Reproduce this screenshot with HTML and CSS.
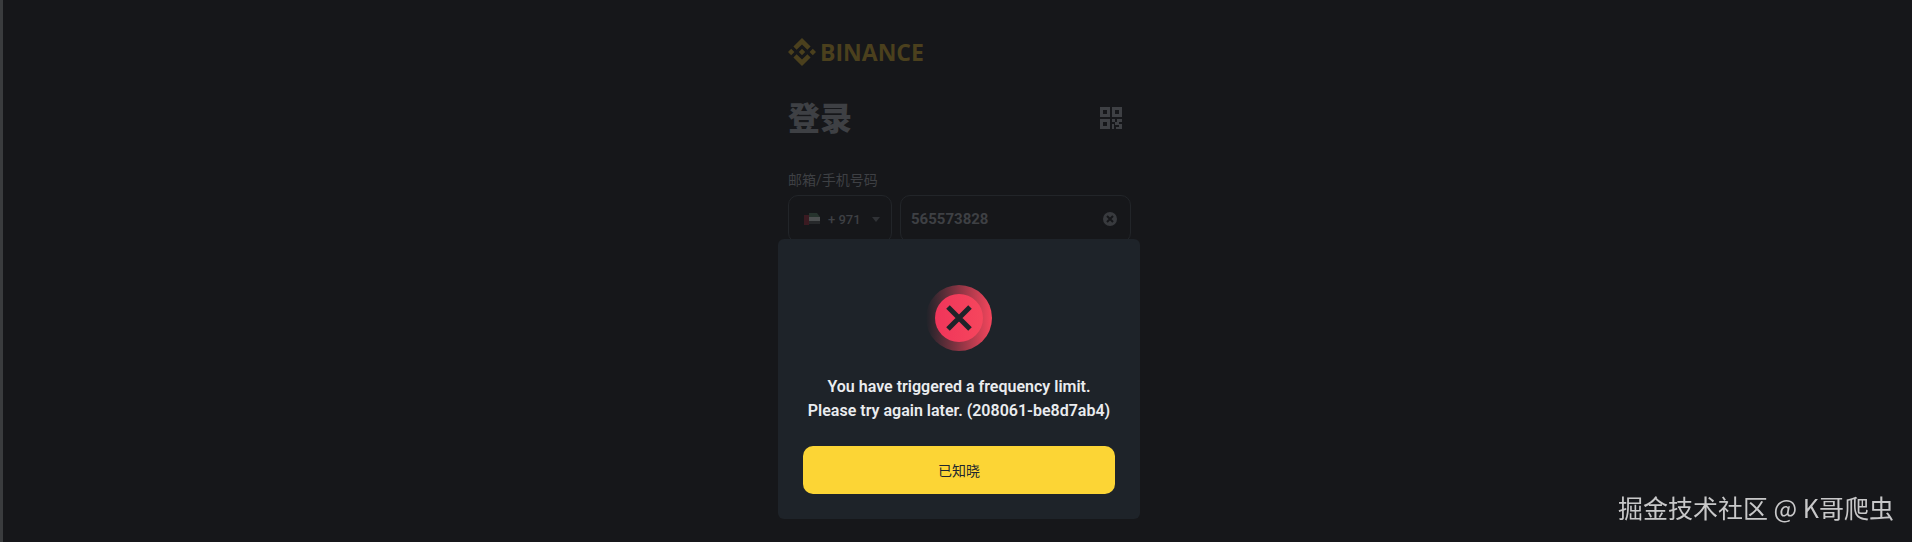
FILE: index.html
```html
<!DOCTYPE html>
<html lang="zh-CN">
<head>
<meta charset="utf-8">
<meta name="viewport" content="width=device-width, initial-scale=1">
<title>登录</title>
<link rel="stylesheet" href="styles.css">
</head>
<body>
<main class="login">
  <div class="brand">
    <svg class="brand-mark" viewBox="0 0 28 28" aria-hidden="true"><path d="M14 0 22.6 8.6 19.4 11.8 14 6.4 8.6 11.8 5.4 8.6ZM14 28 5.4 19.4 8.6 16.2 14 21.6 19.4 16.2 22.6 19.4ZM0 14l3.2-3.2L6.4 14l-3.2 3.2ZM21.6 14l3.2-3.2L28 14l-3.2 3.2ZM10.8 14l3.2-3.2 3.2 3.2-3.2 3.2Z"/></svg>
    <span class="brand-name">BINANCE</span>
  </div>
  <div class="title-row">
    <h1 class="title">登录</h1>
    <button class="qr" type="button" aria-label="QR">
      <svg class="qr-icon" viewBox="0 0 22 22"><path fill-rule="evenodd" d="M0 0h10v10H0ZM3 3v4h4V3ZM12 0h10v10H12ZM15 3v4h4V3ZM0 12h10v10H0ZM3 15v4h4v-4ZM12 12h3v3h-3ZM17 12h5v3h-3v3h-4v-3h2ZM12 17h2v5h-2ZM19 17h3v5h-6v-2h3Z"/></svg>
    </button>
  </div>
  <label class="label" for="account">邮箱/手机号码</label>
  <div class="fields">
    <button class="country" type="button">
      <svg class="flag" viewBox="0 0 16 12" aria-hidden="true"><path fill="#3a1a21" d="M0 2h5v10H0z"/><path fill="#26332d" d="M5 0h8l3 4H5z"/><path fill="#4c4f50" d="M5 4h11v4H5z"/><path fill="#26282a" d="M5 8h11v3H5z"/></svg>
      <span class="code">+ 971</span>
      <svg class="caret" viewBox="0 0 8 5" aria-hidden="true"><path d="M0 0h8L4 5z"/></svg>
    </button>
    <div class="account-box">
      <input class="account" id="account" type="text" value="565573828">
      <button class="clear" type="button" aria-label="清除">
        <svg class="clear-icon" viewBox="0 0 16 16"><circle cx="8" cy="8" r="8"/><path d="m5 5 6 6m0-6-6 6"/></svg>
      </button>
    </div>
  </div>
</main>
<section class="modal" role="alertdialog" aria-labelledby="message">
  <svg class="error-icon" viewBox="0 0 66 66" aria-hidden="true">
    <defs><linearGradient id="ring"><stop offset="0" stop-color="#f6465d" stop-opacity="0"/><stop offset="1" stop-color="#f6465d"/></linearGradient>
    <linearGradient id="disc"><stop offset="0" stop-color="#f0355a"/><stop offset="1" stop-color="#f6465d"/></linearGradient></defs>
    <circle cx="33" cy="33" r="33" fill="url(#ring)"/><circle cx="33" cy="33" r="24" fill="url(#disc)"/>
    <path d="m22 22 22 22m0-22-22 22" stroke="#1e2329" stroke-width="5"/>
  </svg>
  <p class="message" id="message">You have triggered a frequency limit.<br>Please try again later. (208061-be8d7ab4)</p>
  <button class="confirm" type="button">已知晓</button>
</section>
<div class="watermark">掘金技术社区 @ K哥爬虫</div>
</body>
</html>
```
FILE: styles.css
```css
* {
  box-sizing: border-box;
}

body {
  margin: 0;
  min-height: 100vh;
  padding: 38px 16px 0 20px;
  border-left: 3px solid #3a3c3e;
  background: #16171a;
  color: #3e4044;
  font-family: Roboto, "Noto Sans CJK SC", sans-serif;
  overflow: hidden;
}

button,
input {
  margin: 0;
  padding: 0;
  border: 0;
  background: none;
  color: inherit;
  font: inherit;
}

svg {
  display: block;
}

.login {
  max-width: 343px;
  margin: 0 auto;
}

.brand {
  display: flex;
  align-items: center;
  gap: 4px;
  height: 28px;
  color: #4b401d;
}

.brand-mark {
  width: 28px;
  height: 28px;
  fill: currentColor;
}

.brand-name {
  font: 700 23px/28px "Open Sans", sans-serif;
}

.title-row {
  display: flex;
  align-items: center;
  justify-content: space-between;
  height: 48px;
  margin-top: 28px;
  padding-right: 9px;
}

.title {
  margin: 0;
  padding-top: 2px;
  font-size: 32px;
  font-weight: 900;
  line-height: 48px;
}

.qr-icon {
  width: 22px;
  height: 22px;
  fill: currentColor;
}

.label {
  display: block;
  margin-top: 28px;
  font-size: 14px;
  line-height: 20px;
}

.fields {
  display: flex;
  gap: 8px;
  margin-top: 5px;
}

.country,
.account-box {
  display: flex;
  align-items: center;
  height: 48px;
  border: 1px solid #222529;
  border-radius: 10px;
}

.country {
  width: 104px;
  padding: 0 11px 0 15px;
}

.flag {
  width: 16px;
  height: 12px;
}

.code {
  margin-left: 8px;
  font-size: 13px;
  font-weight: 500;
}

.caret {
  width: 8px;
  height: 5px;
  margin-left: auto;
  fill: #303236;
}

.account-box {
  flex: 1;
  min-width: 0;
  padding: 0 12px 0 10px;
}

.account {
  flex: 1;
  min-width: 0;
  font-size: 15px;
  font-weight: 700;
}

.clear-icon {
  width: 16px;
  height: 16px;
  fill: #383a3e;
  stroke: #16171a;
  stroke-width: 2;
}

/* Dialog lies over the form */
.modal {
  position: fixed;
  top: 239px;
  left: calc(50% + 3px);
  transform: translateX(-50%);
  display: flex;
  flex-direction: column;
  align-items: center;
  width: 362px;
  max-width: 100%;
  padding: 46px 25px 25px;
  border-radius: 6px;
  background: #1e2329;
}

.error-icon {
  width: 66px;
  height: 66px;
}

.message {
  margin: 24px 0 23px;
  color: #eaecef;
  font-size: 16px;
  font-weight: 600;
  line-height: 24px;
  text-align: center;
}

.confirm {
  width: 100%;
  height: 48px;
  border-radius: 10px;
  background: #fcd535;
  color: #202630;
  font-size: 14px;
}

.watermark {
  position: fixed;
  right: 18px;
  bottom: 17px;
  color: #c8c8c9;
  font: 25px/36px "Noto Sans CJK SC", sans-serif;
}
```
